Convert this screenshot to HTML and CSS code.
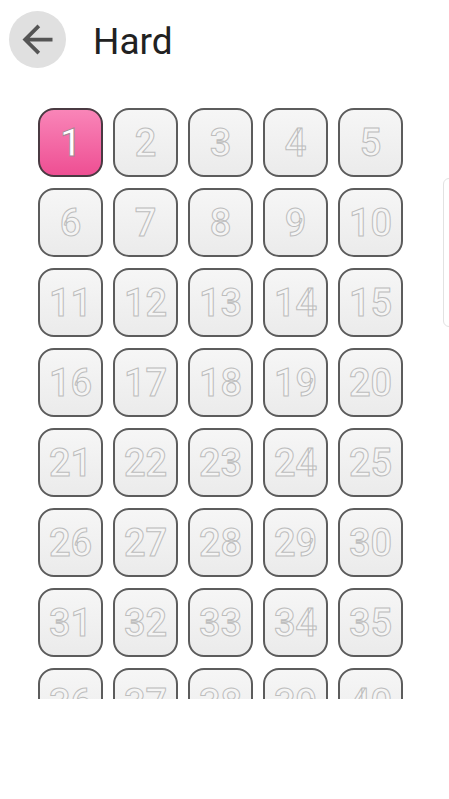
FILE: index.html
```html
<!DOCTYPE html>
<html lang="en">
<head>
    <meta charset="UTF-8">
    <meta name="viewport" content="width=device-width, initial-scale=1.0">
    <title>Hard</title>
    <link rel="stylesheet" href="styles.css">
</head>
<body>
    <header class="top-bar">
        <button class="back-btn" aria-label="Back">
            <svg viewBox="0 0 24 24" width="45" height="45">
                <path d="M20 11H7.83l5.59-5.59L12 4l-8 8 8 8 1.41-1.41L7.83 13H20v-2z" fill="#555"/>
            </svg>
        </button>
        <h1 class="title">Hard</h1>
    </header>

    <div class="levels">
        <div class="level-grid" id="levelGrid"></div>
    </div>

    <div class="side-handle"></div>

    <script>
        // Build the level tiles
        var grid = document.getElementById("levelGrid");
        for (var i = 1; i <= 40; i++) {
            var tile = document.createElement("div");
            tile.className = i === 1 ? "tile tile-open" : "tile";
            tile.textContent = i;
            grid.appendChild(tile);
        }
    </script>
</body>
</html>
```

FILE: styles.css
```css
body {
    margin: 0;
    background-color: #fff;
    font-family: Roboto, "Noto Sans", Arial, sans-serif;
    height: 799px;
    overflow: hidden;
}
.top-bar {
    display: flex;
    align-items: center;
    height: 80px;
    padding-left: 9px;
    box-sizing: border-box;
}
.back-btn {
    width: 57px;
    height: 57px;
    border-radius: 50%;
    border: none;
    padding: 0;
    background-color: #e0e0e0;
    display: flex;
    align-items: center;
    justify-content: center;
    margin-top: -2px;
}
.title {
    margin: 2px 0 0 27px;
    font-size: 37px;
    font-weight: 400;
    color: #212121;
}
.levels {
    margin-top: 28px;
    height: 591px;
    overflow: hidden;
    padding-left: 38px;
}
.level-grid {
    display: grid;
    grid-template-columns: repeat(5, 65px);
    grid-auto-rows: 69px;
    column-gap: 10px;
    row-gap: 11px;
}
.tile {
    box-sizing: border-box;
    border: 2px solid #5c5c5c;
    border-radius: 16px;
    background: linear-gradient(#f6f6f6, #ebebeb);
    display: flex;
    align-items: center;
    justify-content: center;
    font-size: 38px;
    font-weight: 500;
    color: #f5f5f5;
    -webkit-text-stroke: 1px #bdbdbd;
}
.tile-open {
    border-color: #4a3a42;
    background: linear-gradient(#f985b8, #ee4f93);
    color: #fff;
    -webkit-text-stroke: 1px #a88494;
}
.side-handle {
    position: absolute;
    left: 443px;
    top: 178px;
    width: 12px;
    height: 149px;
    border: 1px solid #e2e2e2;
    border-radius: 6px;
    box-sizing: border-box;
}
```
